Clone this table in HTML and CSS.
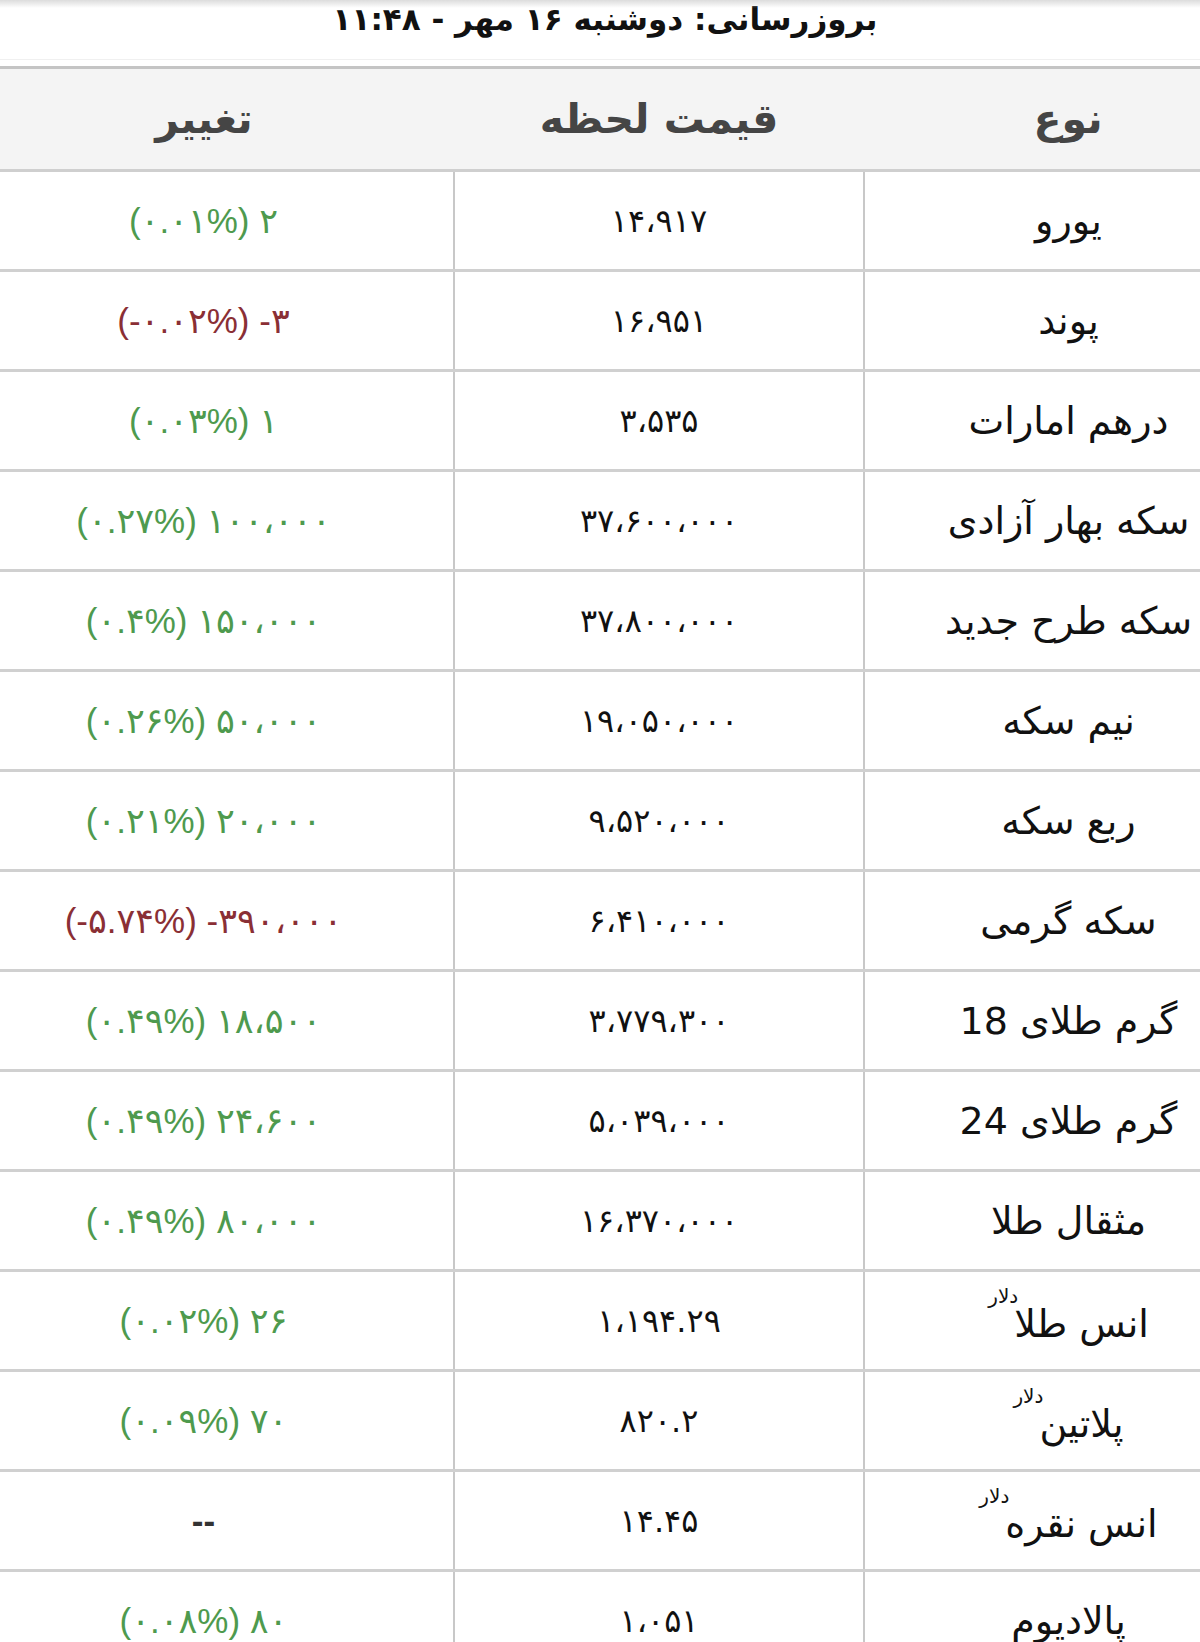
FILE: index.html
```html
<!DOCTYPE html>
<html lang="fa">
<head>
<meta charset="utf-8">
<title>قیمت لحظه</title>
<link rel="stylesheet" href="styles.css">
</head>
<body>
<div class="page">
  <div class="topshade"></div>
  <div class="updated" dir="rtl">بروزرسانی: دوشنبه ۱۶ مهر - ۱۱:۴۸</div>
  <div class="tablewrap">
    <table class="prices" dir="rtl">
      <colgroup>
        <col class="c-name">
        <col class="c-price">
        <col class="c-change">
      </colgroup>
      <thead>
        <tr>
          <th>نوع</th>
          <th>قیمت لحظه</th>
          <th>تغییر</th>
        </tr>
      </thead>
      <tbody>
        <tr><td class="name">یورو</td><td class="price" dir="ltr">۱۴،۹۱۷</td><td class="chg up" dir="ltr">(۰.۰۱%) ۲</td></tr>
        <tr><td class="name">پوند</td><td class="price" dir="ltr">۱۶،۹۵۱</td><td class="chg down" dir="ltr">(-۰.۰۲%) -۳</td></tr>
        <tr><td class="name">درهم امارات</td><td class="price" dir="ltr">۳،۵۳۵</td><td class="chg up" dir="ltr">(۰.۰۳%) ۱</td></tr>
        <tr><td class="name">سکه بهار آزادی</td><td class="price" dir="ltr">۳۷،۶۰۰،۰۰۰</td><td class="chg up" dir="ltr">(۰.۲۷%) ۱۰۰،۰۰۰</td></tr>
        <tr><td class="name">سکه طرح جدید</td><td class="price" dir="ltr">۳۷،۸۰۰،۰۰۰</td><td class="chg up" dir="ltr">(۰.۴%) ۱۵۰،۰۰۰</td></tr>
        <tr><td class="name">نیم سکه</td><td class="price" dir="ltr">۱۹،۰۵۰،۰۰۰</td><td class="chg up" dir="ltr">(۰.۲۶%) ۵۰،۰۰۰</td></tr>
        <tr><td class="name">ربع سکه</td><td class="price" dir="ltr">۹،۵۲۰،۰۰۰</td><td class="chg up" dir="ltr">(۰.۲۱%) ۲۰،۰۰۰</td></tr>
        <tr><td class="name">سکه گرمی</td><td class="price" dir="ltr">۶،۴۱۰،۰۰۰</td><td class="chg down" dir="ltr">(-۵.۷۴%) -۳۹۰،۰۰۰</td></tr>
        <tr><td class="name">گرم طلای 18</td><td class="price" dir="ltr">۳،۷۷۹،۳۰۰</td><td class="chg up" dir="ltr">(۰.۴۹%) ۱۸،۵۰۰</td></tr>
        <tr><td class="name">گرم طلای 24</td><td class="price" dir="ltr">۵،۰۳۹،۰۰۰</td><td class="chg up" dir="ltr">(۰.۴۹%) ۲۴،۶۰۰</td></tr>
        <tr><td class="name">مثقال طلا</td><td class="price" dir="ltr">۱۶،۳۷۰،۰۰۰</td><td class="chg up" dir="ltr">(۰.۴۹%) ۸۰،۰۰۰</td></tr>
        <tr><td class="name">انس طلا&zwnj;<sup class="unit">دلار</sup></td><td class="price" dir="ltr">۱،۱۹۴.۲۹</td><td class="chg up" dir="ltr">(۰.۰۲%) ۲۶</td></tr>
        <tr><td class="name">پلاتین&zwnj;<sup class="unit">دلار</sup></td><td class="price" dir="ltr">۸۲۰.۲</td><td class="chg up" dir="ltr">(۰.۰۹%) ۷۰</td></tr>
        <tr><td class="name">انس نقره&zwnj;<sup class="unit">دلار</sup></td><td class="price" dir="ltr">۱۴.۴۵</td><td class="chg none" dir="ltr">--</td></tr>
        <tr><td class="name">پالادیوم</td><td class="price" dir="ltr">۱،۰۵۱</td><td class="chg up" dir="ltr">(۰.۰۸%) ۸۰</td></tr>
      </tbody>
    </table>
  </div>
</div>
</body>
</html>
```

FILE: styles.css
```css
html, body {
  margin: 0;
  padding: 0;
  background: #ffffff;
}

body {
  width: 1200px;
  height: 1642px;
  overflow: hidden;
  font-family: "Liberation Sans", "DejaVu Sans", sans-serif;
  color: #1a1a1a;
}

.page {
  position: relative;
  width: 1200px;
  height: 1642px;
  overflow: hidden;
}

.topshade {
  position: absolute;
  top: 0;
  left: 0;
  right: 0;
  height: 8px;
  background: linear-gradient(#dcdcdc, rgba(255,255,255,0));
}

.updated {
  height: 60px;
  text-align: center;
  font-family: "DejaVu Sans", sans-serif;
  font-size: 31px;
  font-weight: bold;
  line-height: 40px;
  margin-top: -1px;
  color: #111;
  padding-left: 10px;
  border-bottom: 1px solid #f0f0f0;
}

.tablewrap {
  width: 1200px;
  overflow: hidden;
  margin-top: 6px;
  border-top: 3px solid #c4c4c4;
}

.prices {
  width: 1318px;
  margin-left: -46px;
  border-collapse: collapse;
  table-layout: fixed;
}

.c-name { width: 408px; }
.c-price { width: 410px; }
.c-change { width: 500px; }

.prices th {
  height: 100px;
  padding: 0;
  background: #f4f4f4;
  color: #454545;
  font-family: "DejaVu Sans", sans-serif;
  font-size: 41px;
  font-weight: bold;
  text-align: center;
  border-bottom: 3px solid #cfcfcf;
}

.prices td {
  height: 97px;
  padding: 0;
  text-align: center;
  border-bottom: 3px solid #d0d0d0;
  border-left: 2px solid #c8c8c8;
  font-size: 33px;
}

.prices td:last-child {
  border-left: none;
}

.name {
  font-family: "DejaVu Sans", sans-serif;
  font-size: 38px !important;
  color: #111;
}

.unit {
  font-size: 20px;
  vertical-align: 34px;
  line-height: 0;
  margin-right: -4px;
}

.price {
  font-family: "DejaVu Sans", sans-serif;
  color: #111;
  font-size: 32px !important;
}

.chg {
  font-family: "Liberation Sans", "DejaVu Sans", sans-serif;
  font-size: 35px !important;
}

.chg.up { color: #4e9a4e; }
.chg.down { color: #8a2f35; }
.chg.none { color: #333; font-weight: bold; }
```
